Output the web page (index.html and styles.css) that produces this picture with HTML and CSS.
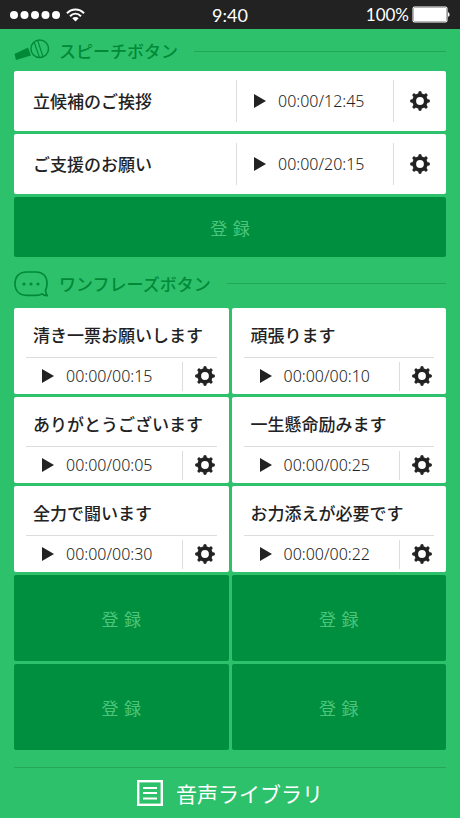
FILE: index.html
```html
<!DOCTYPE html>
<html lang="ja">
<head>
    <meta charset="UTF-8">
    <meta name="viewport" content="width=device-width, initial-scale=1">
    <title>音声ライブラリ</title>
    <link rel="stylesheet" href="styles.css">
</head>
<body>
    <!-- Shared icons -->
    <svg class="sprite" aria-hidden="true">
        <symbol id="play" viewBox="0 0 12 14">
            <path d="M0 0L12 7L0 14z" fill="currentColor"/>
        </symbol>
        <symbol id="gear" viewBox="0 0 20 20">
            <g fill="none" stroke="currentColor">
                <circle cx="10" cy="10" r="5.8" stroke-width="3.8"/>
                <path d="M10 1.7v2M10 16.3v2M1.7 10h2M16.3 10h2M4.1 4.1l1.4 1.4M14.5 14.5l1.4 1.4M4.1 15.9l1.4-1.4M14.5 5.5l1.4-1.4" stroke-width="3.4" stroke-linecap="round"/>
            </g>
        </symbol>
    </svg>

    <div class="status">
        <div class="signal">
            <svg width="50" height="8" viewBox="0 0 50 8" fill="#fff">
                <circle cx="4" cy="4" r="4"/><circle cx="14.5" cy="4" r="4"/><circle cx="25" cy="4" r="4"/><circle cx="35.5" cy="4" r="4"/><circle cx="46" cy="4" r="4"/>
            </svg>
            <svg width="19" height="14" viewBox="0 0 19 14" fill="none" stroke="#fff" stroke-width="2">
                <path d="M1 5.2C5.8 0.2 13.2 0.2 18 5.2"/>
                <path d="M4 8.2c3.3-3.2 7.7-3.2 11 0"/>
                <path d="M6.3 10.3c2-1.8 4.4-1.8 6.4 0L9.5 13.5z" fill="#fff" stroke="none"/>
            </svg>
        </div>
        <div class="clock">9:40</div>
        <div class="battery">
            <span>100%</span>
            <svg width="38" height="17" viewBox="0 0 38 17">
                <rect x="0.5" y="0.5" width="35" height="16" rx="2" fill="#fff"/>
                <rect x="1.5" y="1.5" width="33" height="14" rx="1" fill="none" stroke="#888" stroke-width="0.6"/>
                <path d="M36 6.5h1q1 2 0 4h-1z" fill="#fff"/>
            </svg>
        </div>
    </div>

    <main>
        <section>
            <h2>
                <svg class="heading-icon" viewBox="0 0 36 28">
                    <path d="M0.5 17L14 10.5L17 18.5L2 23z" fill="#008a37"/>
                    <circle cx="25.7" cy="11.8" r="8.8" fill="none" stroke="#008a37" stroke-width="1.5"/>
                    <path d="M20.3 5.5L25.3 20M23.7 3.5L28.900 19.500" fill="none" stroke="#008a37" stroke-width="1.1"/>
                </svg>
                スピーチボタン
            </h2>
            <div class="speeches">
                <div class="speech">
                    <h3>立候補のご挨拶</h3>
                    <div class="player">
                        <button class="play" aria-label="再生"><svg width="12" height="14"><use href="#play"/></svg></button>
                        <span class="time">00:00/12:45</span>
                    </div>
                    <button class="settings" aria-label="設定"><svg width="20" height="20"><use href="#gear"/></svg></button>
                </div>
                <div class="speech">
                    <h3>ご支援のお願い</h3>
                    <div class="player">
                        <button class="play" aria-label="再生"><svg width="12" height="14"><use href="#play"/></svg></button>
                        <span class="time">00:00/20:15</span>
                    </div>
                    <button class="settings" aria-label="設定"><svg width="20" height="20"><use href="#gear"/></svg></button>
                </div>
                <button class="register">登&#8196;録</button>
            </div>
        </section>

        <section>
            <h2>
                <svg class="heading-icon" viewBox="0 0 36 28">
                    <path d="M12.5 2h9.5C29 2 33 6.5 33 13.5C33 16.5 32.5 18.5 31.5 20.5C31.5 22.5 32.2 24 33.3 25.7C31 25.6 29.5 24.8 28 23.9C26.5 24.9 24.5 25.3 22 25.3H12.5C5 25.3 1 20.5 1 13.6C1 6.5 5.5 2 12.5 2z" fill="none" stroke="#008a37" stroke-width="1.7" stroke-linejoin="round"/>
                    <g fill="#008a37"><circle cx="10" cy="14" r="1.6"/><circle cx="17" cy="14" r="1.6"/><circle cx="24" cy="14" r="1.6"/></g>
                </svg>
                ワンフレーズボタン
            </h2>
            <div class="phrases">
                <div class="phrase">
                    <h3>清き一票お願いします</h3>
                    <div class="player">
                        <button class="play" aria-label="再生"><svg width="12" height="14"><use href="#play"/></svg></button>
                        <span class="time">00:00/00:15</span>
                        <button class="settings" aria-label="設定"><svg width="20" height="20"><use href="#gear"/></svg></button>
                    </div>
                </div>
                <div class="phrase">
                    <h3>頑張ります</h3>
                    <div class="player">
                        <button class="play" aria-label="再生"><svg width="12" height="14"><use href="#play"/></svg></button>
                        <span class="time">00:00/00:10</span>
                        <button class="settings" aria-label="設定"><svg width="20" height="20"><use href="#gear"/></svg></button>
                    </div>
                </div>
                <div class="phrase">
                    <h3>ありがとうございます</h3>
                    <div class="player">
                        <button class="play" aria-label="再生"><svg width="12" height="14"><use href="#play"/></svg></button>
                        <span class="time">00:00/00:05</span>
                        <button class="settings" aria-label="設定"><svg width="20" height="20"><use href="#gear"/></svg></button>
                    </div>
                </div>
                <div class="phrase">
                    <h3>一生懸命励みます</h3>
                    <div class="player">
                        <button class="play" aria-label="再生"><svg width="12" height="14"><use href="#play"/></svg></button>
                        <span class="time">00:00/00:25</span>
                        <button class="settings" aria-label="設定"><svg width="20" height="20"><use href="#gear"/></svg></button>
                    </div>
                </div>
                <div class="phrase">
                    <h3>全力で闘います</h3>
                    <div class="player">
                        <button class="play" aria-label="再生"><svg width="12" height="14"><use href="#play"/></svg></button>
                        <span class="time">00:00/00:30</span>
                        <button class="settings" aria-label="設定"><svg width="20" height="20"><use href="#gear"/></svg></button>
                    </div>
                </div>
                <div class="phrase">
                    <h3>お力添えが必要です</h3>
                    <div class="player">
                        <button class="play" aria-label="再生"><svg width="12" height="14"><use href="#play"/></svg></button>
                        <span class="time">00:00/00:22</span>
                        <button class="settings" aria-label="設定"><svg width="20" height="20"><use href="#gear"/></svg></button>
                    </div>
                </div>
                <button class="register">登&#8196;録</button>
                <button class="register">登&#8196;録</button>
                <button class="register">登&#8196;録</button>
                <button class="register">登&#8196;録</button>
            </div>
        </section>
    </main>

    <footer>
        <a class="library" href="#">
            <svg width="26" height="26" viewBox="0 0 26 26" fill="none" stroke="#fff">
                <rect x="1.2" y="1.2" width="23.6" height="23.6" stroke-width="2.4"/>
                <path d="M6 8h14M6 13h14M6 18.5h14" stroke-width="1.8"/>
            </svg>
            音声ライブラリ
        </a>
    </footer>
</body>
</html>
```

FILE: styles.css
```css
* {
    box-sizing: border-box;
}
body {
    margin: 0;
    background: #2ec16c;
    color: #222;
    font-family: "Noto Sans CJK JP", sans-serif;
}
svg {
    display: block;
    flex: none;
}
h2, h3 {
    margin: 0;
    font-size: 17px;
    font-weight: 500;
    line-height: 24px;
}
button {
    margin: 0;
    padding: 0;
    border: 0;
    background: none;
    color: inherit;
    font: inherit;
    cursor: pointer;
}
.sprite {
    display: none;
}

/* status bar */
.status {
    display: grid;
    grid-template-columns: 1fr auto 1fr;
    align-items: center;
    height: 29px;
    padding: 0 10px;
    background: #222;
    color: #fff;
    font-family: Lato, sans-serif;
    font-size: 18px;
    line-height: 28px;
}
.signal, .battery {
    display: flex;
    align-items: center;
    gap: 6px;
}
.battery {
    gap: 3px;
    justify-content: flex-end;
    font-size: 17px;
}

/* section headings */
main {
    padding: 0 14px;
}
h2 {
    display: flex;
    align-items: center;
    height: 42px;
    padding-top: 2px;
    color: #008a37;
}
section + section h2 {
    height: 51px;
}
h2::after {
    content: "";
    flex: 1;
    height: 1px;
    margin-left: 16px;
    background: #23a456;
}
.heading-icon {
    width: 36px;
    height: 28px;
    margin-right: 9px;
}

/* cards */
.speeches, .phrases {
    display: grid;
    gap: 3px;
}
.phrases {
    grid-template-columns: 1fr 1fr;
}
.speech, .phrase, .register {
    border-radius: 2px;
}
.speech, .phrase {
    background: #fff;
}
.speech {
    display: flex;
    align-items: center;
    height: 60px;
    padding-left: 19px;
}
.speech h3 {
    flex: 1;
}
.speech .player {
    width: 157px;
    height: 42px;
    padding-left: 17px;
    border-left: 1px solid #ddd;
}
.player {
    display: flex;
    align-items: center;
}
.time {
    margin-left: 12px;
    font-family: "Noto Sans", sans-serif;
    font-size: 16px;
    font-weight: 300;
    line-height: 24px;
}
.settings {
    display: flex;
    align-items: center;
    justify-content: center;
    border-left: 1px solid #ddd;
}
.speech .settings {
    width: 53px;
    height: 42px;
}
.phrase {
    height: 86px;
}
.phrase h3 {
    height: 50px;
    margin: 0 12px;
    padding: 15px 7px 0;
    border-bottom: 1px solid #ddd;
    white-space: nowrap;
}
.phrase .player {
    height: 36px;
    padding-left: 28px;
}
.phrase .settings {
    width: 47px;
    height: 29px;
    margin-left: auto;
    padding-right: 2px;
}
.register {
    min-height: 60px;
    background: #008f3e;
    color: #4dc67c;
    font-size: 17px;
}
.phrases .register {
    min-height: 86px;
}

/* bottom link */
footer {
    margin: 17px 14px 0;
    border-top: 1px solid #25a75a;
}
.library {
    display: flex;
    align-items: center;
    justify-content: center;
    gap: 13px;
    height: 49px;
    color: #fff;
    font-size: 21px;
    text-decoration: none;
}
```
